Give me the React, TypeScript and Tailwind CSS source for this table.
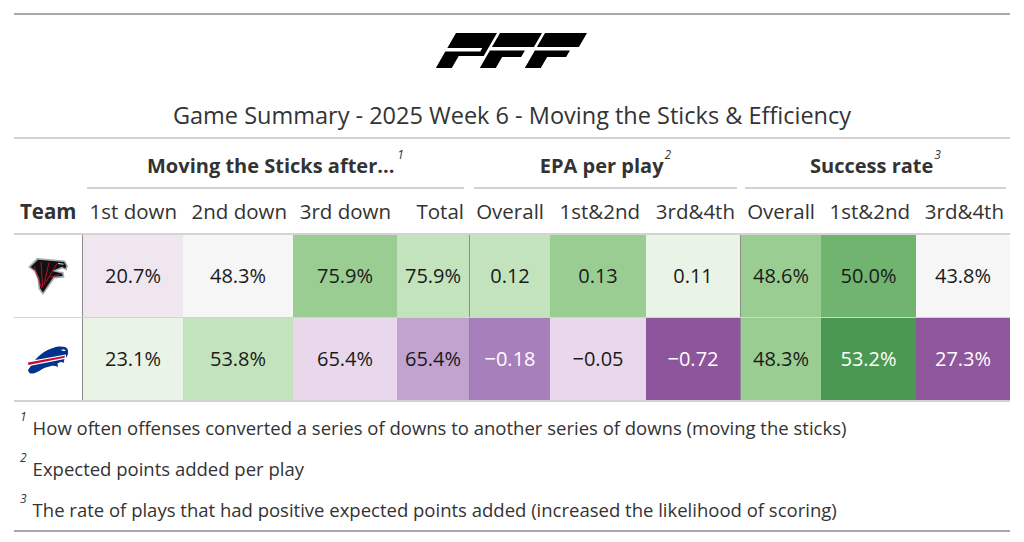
import React from "react";

const cols = "grid grid-cols-[69px_100px_110px_104px_73px_80px_96px_95px_80px_95px_94px]";

type Cell = { v: string; bg: string; light?: boolean };

const rows: { team: "atl" | "buf"; cells: Cell[] }[] = [
  {
    team: "atl",
    cells: [
      { v: "20.7%", bg: "bg-[#efe6f0]" },
      { v: "48.3%", bg: "bg-[#f6f6f6]" },
      { v: "75.9%", bg: "bg-[#9acd92]" },
      { v: "75.9%", bg: "bg-[#c3e3bc]" },
      { v: "0.12", bg: "bg-[#c3e3bc]" },
      { v: "0.13", bg: "bg-[#9acd92]" },
      { v: "0.11", bg: "bg-[#e9f4e6]" },
      { v: "48.6%", bg: "bg-[#9acd92]" },
      { v: "50.0%", bg: "bg-[#71b46f]" },
      { v: "43.8%", bg: "bg-[#f6f6f6]" },
    ],
  },
  {
    team: "buf",
    cells: [
      { v: "23.1%", bg: "bg-[#e9f4e6]" },
      { v: "53.8%", bg: "bg-[#c3e3bc]" },
      { v: "65.4%", bg: "bg-[#e9d8eb]" },
      { v: "65.4%", bg: "bg-[#c2a3cf]" },
      { v: "\u22120.18", bg: "bg-[#a77fba]", light: true },
      { v: "\u22120.05", bg: "bg-[#e9d8eb]" },
      { v: "\u22120.72", bg: "bg-[#8d559c]", light: true },
      { v: "48.3%", bg: "bg-[#9acd92]" },
      { v: "53.2%", bg: "bg-[#4b9853]", light: true },
      { v: "27.3%", bg: "bg-[#8e569d]", light: true },
    ],
  },
];

const labels = ["1st down", "2nd down", "3rd down", "Total", "Overall", "1st&2nd", "3rd&4th", "Overall", "1st&2nd", "3rd&4th"];

function PffLogo() {
  return (
    <svg width="152" height="35" viewBox="0 0 152 35">
      <g transform="translate(20 0) skewX(-30)" fill="#000">
        {/* P */}
        <path d="M0 0 H41 V23 H16 V35 H0 V18.5 H35 V15 H0 Z" />
        {/* F */}
        <path d="M44 0 H86 V14 H44 Z M44 17.5 H79 V24 H60 V35 H44 Z" />
        {/* F */}
        <path d="M89 0 H131 V14 H89 Z M89 17.5 H124 V24 H105 V35 H89 Z" />
      </g>
    </svg>
  );
}

function FalconsLogo() {
  return (
    <svg width="40" height="38" viewBox="0 0 40 38">
      {/* silver outline */}
      <path
        d="M0 10 L9 1 L37 3.5 L40 9 L38.5 13.5 L34.5 11.5 L28 14 L35.5 15 L36.5 20.5 L26.5 21.5 L15 38 L10.5 32 L9.5 22 L6 14.5 Z"
        fill="#a5acaf"
      />
      {/* black body */}
      <path
        d="M2.5 10 L10 2.8 L36 5 L38.3 9 L37.3 11.5 L34 9.8 L24 14 L34 16.5 L34.6 19 L25.5 19.8 L15 35.5 L12 31 L11.2 21.5 L7.8 14 Z"
        fill="#111"
      />
      {/* red feather lines */}
      <path d="M13.5 31 L6 9" stroke="#c8102e" strokeWidth="0.9" />
      <path d="M14.5 30 L13 5" stroke="#c8102e" strokeWidth="0.9" />
      <path d="M16 28 L21 5.5" stroke="#c8102e" strokeWidth="0.9" />
      <path d="M18 25 L29 6.5" stroke="#c8102e" strokeWidth="0.9" />
      <path d="M22 20 L32 17.5" stroke="#c8102e" strokeWidth="0.9" />
      <path d="M30 6.5 L35.5 7.2" stroke="#fff" strokeWidth="0.9" />
    </svg>
  );
}

function BillsLogo() {
  return (
    <svg width="42" height="29" viewBox="0 0 42 29">
      <path
        d="M1 25 L6 18 C10 12 16 6 26 3 C32 1 38 1 40.5 4 C42 8 40.5 12 37.5 14 L36.5 18 C34.5 16.5 32.5 17 30.5 18.5 L31 22 C28.5 20.8 26 20.3 23.5 21.2 C19.5 22 16 23 13 25.5 C10 27.5 7 28.6 4 28.6 C2.5 28.4 1.5 27 1 25 Z"
        fill="#00338d"
      />
      <path d="M0 16.5 L39 9.5 L39 13.8 L0 21.5 Z" fill="#fff" />
      <path d="M1 17.6 L38 10.8 L37.5 12.8 L1.4 20 Z" fill="#c60c30" />
      <path d="M34 5 C36 4.2 38 4.6 38.6 6 C37 6 35.5 6.2 34 5 Z" fill="#fff" />
    </svg>
  );
}

export default function App() {
  return (
    <div className="w-[1024px] h-[542px] bg-white font-['Open_Sans',sans-serif] text-[#333] overflow-hidden">
      <div className="ml-[14px] w-[996px] pt-[13px]">
        <div className="border-t-2 border-[#a8a8a8]" />
        <div className="h-[76px] flex justify-center pt-[18px]">
          <PffLogo />
        </div>
        <div className="h-[46px] flex items-center justify-center pt-[4px] text-[23.5px]">
          Game Summary - 2025 Week 6 - Moving the Sticks &amp; Efficiency
        </div>
        <div className="border-t-2 border-[#d3d3d3]" />

        {/* spanners */}
        <div className={`${cols} h-[50px]`}>
          <div />
          <div className="col-span-4 pl-[4px] pr-[6px]">
            <div className="h-full border-b-2 border-[#d3d3d3] flex items-center justify-center pt-[6px] text-[20px] font-bold">
              Moving the Sticks after...
              <sup className="italic font-normal text-[12px] -mt-[10px] ml-[3px]">1</sup>
            </div>
          </div>
          <div className="col-span-3 px-[4px]">
            <div className="h-full border-b-2 border-[#d3d3d3] flex items-center justify-center pt-[6px] text-[20px] font-bold">
              EPA per play
              <sup className="italic font-normal text-[12px] -mt-[10px] ml-[1px]">2</sup>
            </div>
          </div>
          <div className="col-span-3 px-[4px]">
            <div className="h-full border-b-2 border-[#d3d3d3] flex items-center justify-center pt-[6px] text-[20px] font-bold">
              Success rate
              <sup className="italic font-normal text-[12px] -mt-[10px] ml-[1px]">3</sup>
            </div>
          </div>
        </div>

        {/* column labels */}
        <div className={`${cols} h-[44px] items-center text-[20.5px] whitespace-nowrap`}>
          <div className="pl-[6px] font-bold">Team</div>
          {labels.map((l, i) => (
            <div key={i} className="text-right pr-[6px]">
              {l}
            </div>
          ))}
        </div>
        <div className="border-t-2 border-[#d3d3d3]" />

        {/* body */}
        {rows.map((r, ri) => (
          <div
            key={r.team}
            className={`${cols} ${ri === 0 ? "h-[83px] border-b border-[#d3d3d3]" : "h-[82px]"} text-[20px] text-[#1a1a1a]`}
          >
            <div className="border-r border-[#8c8c8c] flex items-center justify-center">
              {r.team === "atl" ? <FalconsLogo /> : <BillsLogo />}
            </div>
            {r.cells.map((c, ci) => (
              <div
                key={ci}
                className={`${c.bg} ${c.light ? "text-white" : ""} ${ci === 3 || ci === 6 ? "border-r border-[#8c8c8c]" : ""} flex items-center justify-center`}
              >
                {c.v}
              </div>
            ))}
          </div>
        ))}
        <div className="border-t-2 border-[#d3d3d3]" />

        {/* footnotes */}
        <div className="pt-[5px] text-[18.5px] pl-[6px]">
          <div className="h-[41px] flex items-center">
            <sup className="italic text-[12px] -mt-[10px] mr-[6px]">1</sup>
            How often offenses converted a series of downs to another series of downs (moving the sticks)
          </div>
          <div className="h-[41px] flex items-center">
            <sup className="italic text-[12px] -mt-[10px] mr-[6px]">2</sup>
            Expected points added per play
          </div>
          <div className="h-[41px] flex items-center">
            <sup className="italic text-[12px] -mt-[10px] mr-[6px]">3</sup>
            The rate of plays that had positive expected points added (increased the likelihood of scoring)
          </div>
        </div>
        <div className="border-t-2 border-[#a8a8a8]" />
      </div>
    </div>
  );
}
